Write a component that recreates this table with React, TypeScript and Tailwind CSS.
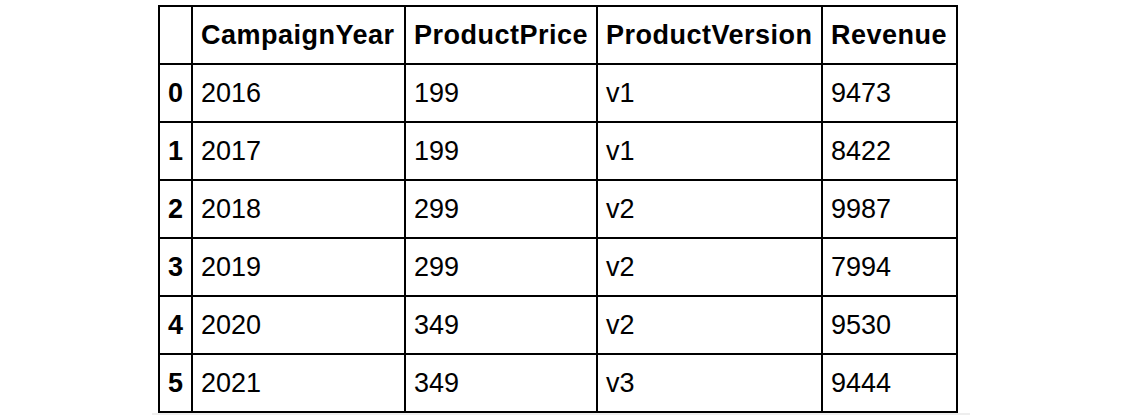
import { Fragment } from "react";

const columns = ["CampaignYear", "ProductPrice", "ProductVersion", "Revenue"];

const rows = [
  ["2016", "199", "v1", "9473"],
  ["2017", "199", "v1", "8422"],
  ["2018", "299", "v2", "9987"],
  ["2019", "299", "v2", "7994"],
  ["2020", "349", "v2", "9530"],
  ["2021", "349", "v3", "9444"],
];

export default function App() {
  return (
    <div
      className="w-[1121px] h-[415px] bg-white text-black overflow-hidden pt-[5px]"
      style={{ fontFamily: '"Liberation Sans", Arial, sans-serif' }}
    >
      {/* DataFrame table */}
      <div className="ml-[158px] w-fit grid grid-cols-[31px_211px_190px_223px_133px] auto-rows-[56px] gap-[2px] p-[2px] bg-black text-[27px] leading-none">
        <div className="bg-white" />
        {columns.map((col) => (
          <div key={col} className="bg-white flex items-center pl-2 font-bold tracking-[0.5px]">
            {col}
          </div>
        ))}
        {rows.map((row, i) => (
          <Fragment key={i}>
            <div className="bg-white flex items-center justify-end pr-2 font-bold">{i}</div>
            {row.map((cell, j) => (
              <div key={j} className="bg-white flex items-center pl-2">
                {cell}
              </div>
            ))}
          </Fragment>
        ))}
      </div>

      {/* faint strip under the output */}
      <div className="ml-[152px] w-[818px] h-[3px] bg-[#eeeeee]" />
    </div>
  );
}
